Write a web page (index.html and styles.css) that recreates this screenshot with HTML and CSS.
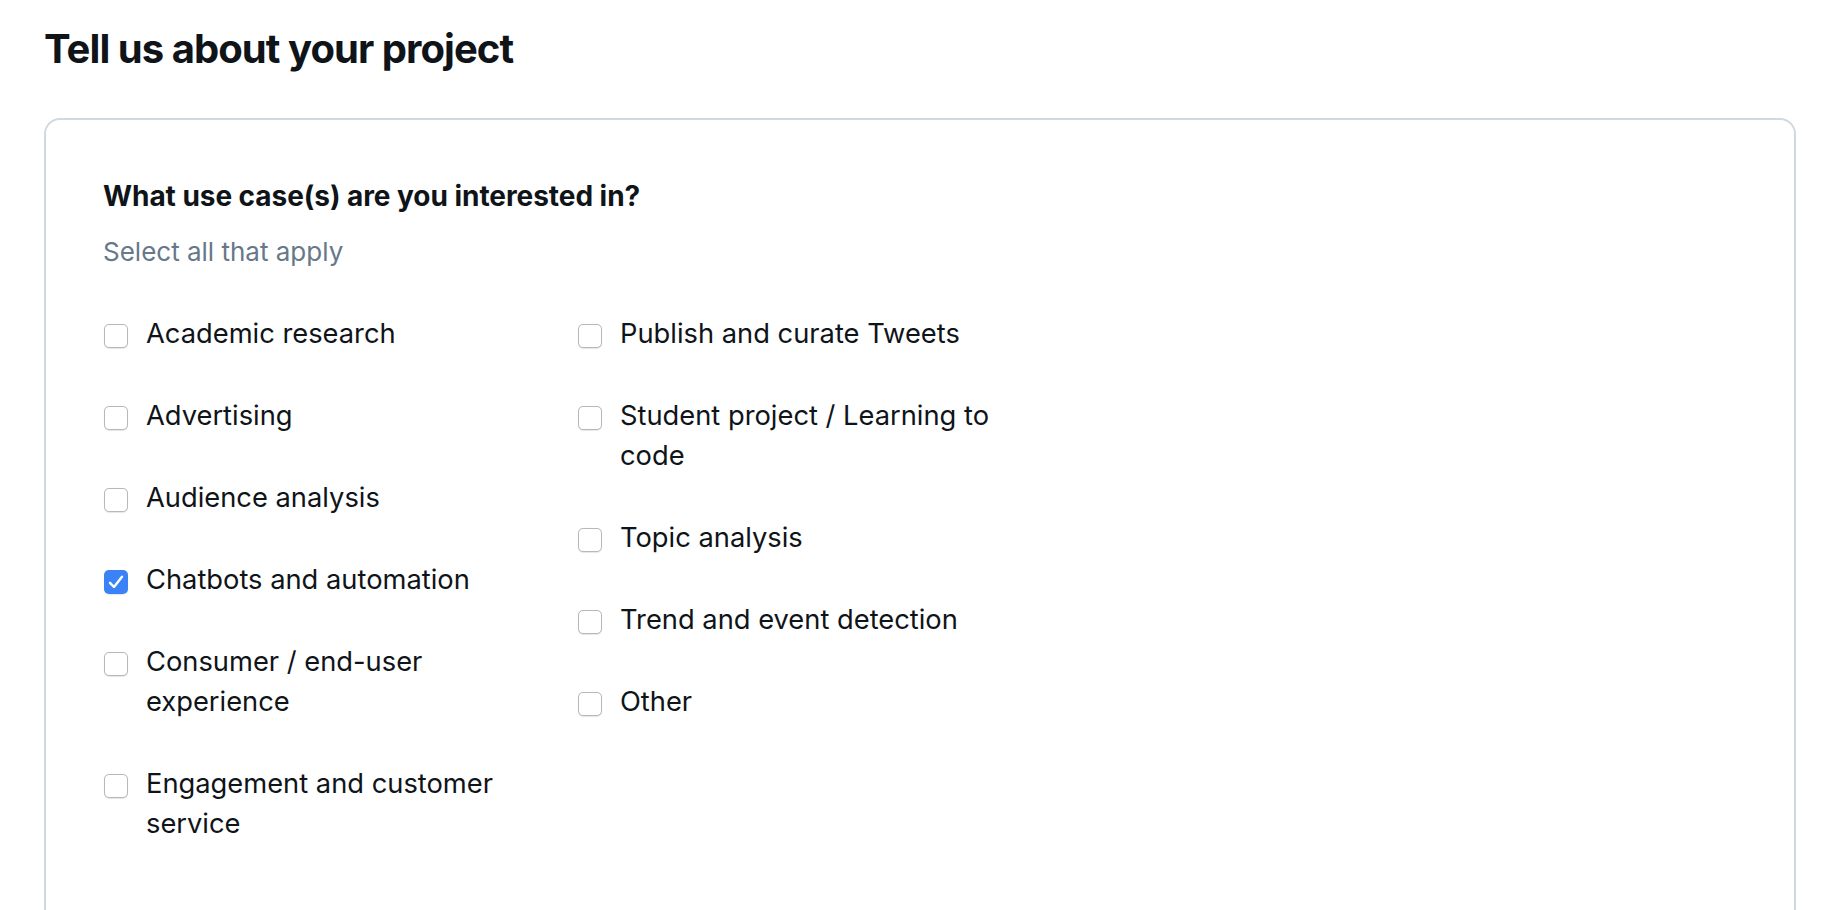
FILE: index.html
```html
<!DOCTYPE html>
<html lang="en">
<head>
<meta charset="utf-8">
<title>Tell us about your project</title>
<link rel="stylesheet" href="styles.css">
</head>
<body>
<main class="page">
  <h1 class="title">Tell us about your project</h1>
  <section class="card">
    <h2 class="question">What use case(s) are you interested in?</h2>
    <p class="hint">Select all that apply</p>
    <div class="options">
      <ul class="col">
        <li class="opt"><span class="box"></span><span class="text">Academic research</span></li>
        <li class="opt"><span class="box"></span><span class="text">Advertising</span></li>
        <li class="opt"><span class="box"></span><span class="text">Audience analysis</span></li>
        <li class="opt"><span class="box checked"><svg viewBox="0 0 24 24" width="24" height="24"><path d="M6 12.8 L10 17 L18 6.8" fill="none" stroke="#fff" stroke-width="2.4" stroke-linecap="round" stroke-linejoin="round"/></svg></span><span class="text">Chatbots and automation</span></li>
        <li class="opt"><span class="box"></span><span class="text">Consumer / end-user experience</span></li>
        <li class="opt"><span class="box"></span><span class="text">Engagement and customer service</span></li>
      </ul>
      <ul class="col">
        <li class="opt"><span class="box"></span><span class="text">Publish and curate Tweets</span></li>
        <li class="opt"><span class="box"></span><span class="text">Student project / Learning to code</span></li>
        <li class="opt"><span class="box"></span><span class="text">Topic analysis</span></li>
        <li class="opt"><span class="box"></span><span class="text">Trend and event detection</span></li>
        <li class="opt"><span class="box"></span><span class="text">Other</span></li>
      </ul>
    </div>
  </section>
</main>
</body>
</html>
```

FILE: styles.css
```css
html, body {
  margin: 0;
  padding: 0;
  background: #ffffff;
}

body {
  font-family: Inter, "Noto Sans", "Liberation Sans", sans-serif;
  color: #0f1419;
  overflow: hidden;
  height: 910px;
}

.page {
  padding: 25px 42px 0 44px;
}

.title {
  margin: 0 0 45px 0;
  font-size: 40px;
  line-height: 48px;
  font-weight: 700;
  letter-spacing: -0.95px;
  color: #0f1419;
}

.card {
  border: 2px solid #cfd9de;
  border-radius: 16px;
  padding: 56px 56px 0 57px;
  height: 820px;
}

.question {
  margin: 0;
  font-size: 28px;
  line-height: 40px;
  font-weight: 700;
  letter-spacing: -0.05px;
  color: #0f1419;
}

.hint {
  margin: 16px 0 0 0;
  font-size: 26px;
  line-height: 40px;
  color: #66788a;
}

.options {
  display: flex;
  gap: 44px;
  margin-top: 42px;
  padding-left: 1px;
}

.col {
  list-style: none;
  margin: 0;
  padding: 0;
  width: 430px;
  display: flex;
  flex-direction: column;
  gap: 42px;
}

.opt {
  display: flex;
  align-items: flex-start;
  gap: 18px;
  font-size: 27.3px;
  line-height: 40px;
  color: #0f1419;
}

.box {
  flex: 0 0 auto;
  box-sizing: border-box;
  width: 24px;
  height: 24px;
  margin-top: 10px;
  border: 1.5px solid #b8b8b8;
  border-radius: 5px;
  background: #ffffff;
  box-shadow: 0 0.5px 1px rgba(0, 0, 0, 0.1);
}

.box.checked {
  border: none;
  background: #3b82f6;
}

.box svg {
  display: block;
}

.text {
  flex: 1 1 auto;
}
```
